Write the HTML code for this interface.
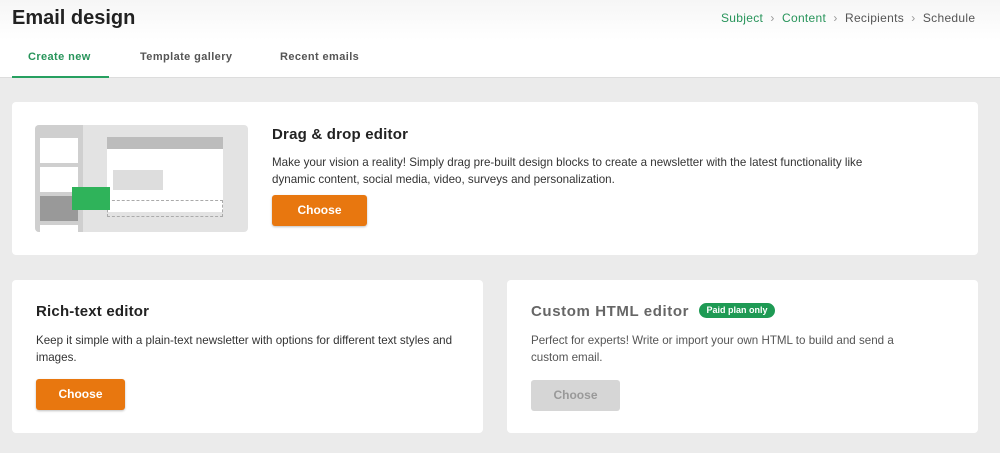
<!DOCTYPE html>
<html><head><style>
*{margin:0;padding:0;box-sizing:border-box}
body{width:1000px;height:453px;background:#ebebeb;font-family:"Liberation Sans",sans-serif;color:#333;position:relative;overflow:hidden}
.hdr{position:absolute;left:0;top:0;width:1000px;height:78px;background:linear-gradient(#f6f6f6,#fff 40px);border-bottom:1px solid #ddd}
.t{position:absolute}
.card{position:absolute;background:#fff;border-radius:4px}
h2{position:absolute;font-size:15px;font-weight:bold;color:#222;letter-spacing:0.2px}
p{position:absolute;font-size:11.6px;line-height:17px;color:#333}
.btn{position:absolute;border-radius:3px;background:#e8770f;color:#fff;font-size:12px;font-weight:bold;text-align:center;box-shadow:0 1px 2px rgba(0,0,0,.25)}
</style></head><body>
<div class="hdr">
<div class="t" style="left:12px;top:7px;font-size:20px;font-weight:bold;color:#222">Email design</div>
<div class="t" style="left:721px;top:11px;font-size:12px;color:#555;letter-spacing:0.3px"><span style="color:#27945a">Subject</span> &nbsp;<span style="color:#999">›</span>&nbsp; <span style="color:#27945a">Content</span> &nbsp;<span style="color:#999">›</span>&nbsp; Recipients &nbsp;<span style="color:#999">›</span>&nbsp; Schedule</div>
<div class="t" style="left:28px;top:51px;font-size:11px;font-weight:bold;color:#27945a;letter-spacing:0.4px">Create new</div>
<div class="t" style="left:140px;top:51px;font-size:11px;font-weight:bold;color:#555;letter-spacing:0.4px">Template gallery</div>
<div class="t" style="left:280px;top:51px;font-size:11px;font-weight:bold;color:#555;letter-spacing:0.4px">Recent emails</div>
<div class="t" style="left:12px;top:76px;width:97px;height:2px;background:#27a060"></div>
</div>

<div class="card" style="left:12px;top:102px;width:966px;height:153px">
<div class="t" style="left:23px;top:23px;width:213px;height:107px;background:#e3e3e3;border-radius:4px;overflow:hidden">
 <div class="t" style="left:0;top:0;width:48px;height:107px;background:#cfcfcf"></div>
 <div class="t" style="left:5px;top:13px;width:38px;height:25px;background:#fff"></div>
 <div class="t" style="left:5px;top:42px;width:38px;height:25px;background:#fff"></div>
 <div class="t" style="left:5px;top:71px;width:38px;height:25px;background:#999"></div>
 <div class="t" style="left:5px;top:100px;width:38px;height:10px;background:#fff"></div>
 <div class="t" style="left:72px;top:12px;width:116px;height:75px;background:#fff"></div>
 <div class="t" style="left:72px;top:12px;width:116px;height:12px;background:#bcbcbc"></div>
 <div class="t" style="left:78px;top:45px;width:50px;height:20px;background:#ddd"></div>
 <div class="t" style="left:72px;top:75px;width:116px;height:17px;border:1px dashed #aaa"></div>
 <div class="t" style="left:37px;top:62px;width:38px;height:23px;background:#2fb35a"></div>
</div>
<h2 style="left:260px;top:24px">Drag &amp; drop editor</h2>
<p style="left:260px;top:52px;width:600px">Make your vision a reality! Simply drag pre-built design blocks to create a newsletter with the latest functionality like dynamic content, social media, video, surveys and personalization.</p>
<div class="btn" style="left:260px;top:93px;width:95px;height:31px;line-height:31px">Choose</div>
</div>

<div class="card" style="left:12px;top:280px;width:471px;height:153px">
<h2 style="left:24px;top:23px">Rich-text editor</h2>
<p style="left:24px;top:52px;width:430px">Keep it simple with a plain-text newsletter with options for different text styles and images.</p>
<div class="btn" style="left:24px;top:99px;width:89px;height:31px;line-height:31px">Choose</div>
</div>

<div class="card" style="left:507px;top:280px;width:471px;height:153px">
<h2 style="left:24px;top:23px;color:#666;letter-spacing:0.6px">Custom HTML editor</h2>
<div class="t" style="left:192px;top:23px;width:76px;height:15px;border-radius:8px;background:#1e9a54;color:#fff;font-size:9px;font-weight:bold;text-align:center;line-height:15px">Paid plan only</div>
<p style="left:24px;top:52px;width:395px;color:#555">Perfect for experts! Write or import your own HTML to build and send a custom email.</p>
<div class="btn" style="left:24px;top:100px;width:89px;height:31px;line-height:31px;background:#d6d6d6;color:#999;box-shadow:none">Choose</div>
</div>
</body></html>
